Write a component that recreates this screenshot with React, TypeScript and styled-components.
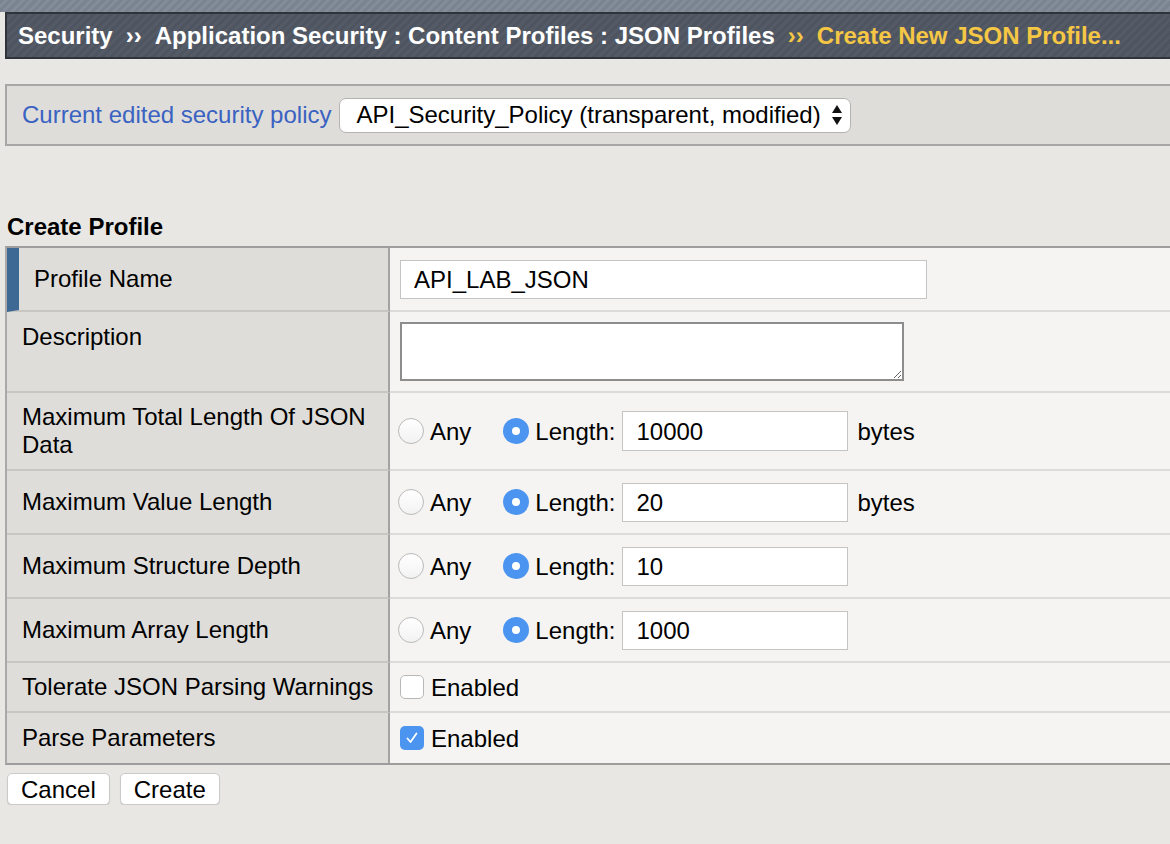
import styled, { createGlobalStyle, css } from 'styled-components'

const GlobalStyle = createGlobalStyle`
    html, body {
        margin: 0;
        padding: 0;
    }
    body {
        background: #e9e7e3;
        font-family: "Liberation Sans", Arial, Helvetica, sans-serif;
        font-size: 24px;
        color: #000;
    }
`

const TopStrip = styled.div`
    height: 12px;
    background: repeating-linear-gradient(135deg, #7a8490 0 3px, #838d99 3px 6px);
`

const Header = styled.div`
    margin-left: 5px;
    height: 43px;
    border: 2px solid #2f333a;
    border-right: none;
    background: repeating-linear-gradient(135deg, #4e5561 0 3px, #545b67 3px 6px);
    display: flex;
    align-items: center;
    padding-left: 11px;
    font-weight: bold;
    color: #fff;
    white-space: nowrap;
`

const Crumb = styled.span<{ $current?: boolean }>`
    color: ${p => p.$current ? '#f6c744' : '#fff'};
`

const Sep = styled.span<{ $current?: boolean }>`
    margin: 0 13px;
    color: ${p => p.$current ? '#f6c744' : '#fff'};
`

const PolicyBar = styled.div`
    margin: 25px 0 0 5px;
    height: 58px;
    border-top: 2px solid #a6a6a6;
    border-bottom: 2px solid #a6a6a6;
    border-left: 2px solid #a6a6a6;
    background: #dfddd9;
    display: flex;
    align-items: center;
    gap: 8px;
    padding-left: 15px;
`

const PolicyLabel = styled.span`
    color: #3a62c2;
`

const PolicySelect = styled.div`
    box-sizing: border-box;
    width: 512px;
    height: 35px;
    border: 1px solid #b3b3b3;
    border-radius: 7px;
    background: #fff;
    display: flex;
    align-items: center;
    gap: 10px;
    padding: 0 0 0 16px;
    white-space: nowrap;
    overflow: hidden;
`

const SectionTitle = styled.div`
    margin: 67px 0 5px;
    padding-left: 7px;
    line-height: 28px;
    font-weight: bold;
`

const FormTable = styled.div`
    margin-left: 5px;
    border-top: 2px solid #9d9d9d;
    border-bottom: 2px solid #9d9d9d;
    border-left: 2px solid #a9a9a9;
`

const Label = styled.div<{ $marker?: boolean; $top?: boolean }>`
    box-sizing: border-box;
    background: #dfddd9;
    border-right: 2px solid #a3a3a3;
    border-bottom: 2px solid #c8c6c2;
    padding-left: 15px;
    padding-right: 6px;
    line-height: 28px;
    display: flex;
    align-items: ${p => p.$top ? 'flex-start' : 'center'};
    padding-top: ${p => p.$top ? '11px' : '0'};
    ${p => p.$marker && css`border-left: 12px solid #3e6994;`}
`

const Value = styled.div<{ $pad?: number; $top?: boolean }>`
    box-sizing: border-box;
    background: #f5f4f2;
    border-bottom: 2px solid #dddbd8;
    padding-left: ${p => p.$pad ?? 10}px;
    display: flex;
    align-items: ${p => p.$top ? 'flex-start' : 'center'};
    padding-top: ${p => p.$top ? '10px' : '0'};
`

const Row = styled.div<{ $h: number }>`
    display: grid;
    grid-template-columns: 383px 1fr;
    height: ${p => p.$h}px;

    &:last-child ${Label}, &:last-child ${Value} {
        border-bottom: none;
    }
`

const TextInput = styled.input<{ $w: number; $h?: number }>`
    box-sizing: border-box;
    width: ${p => p.$w}px;
    height: ${p => p.$h ?? 39}px;
    border: 1px solid #c4c4c4;
    background: #fff;
    padding: 1px 13px 0;
    margin: 0;
    font: inherit;
    color: #000;
    outline: none;
`

const TextArea = styled.textarea`
    box-sizing: border-box;
    width: 504px;
    height: 59px;
    border: 2px solid #8d8d8d;
    background: #fff;
    margin: 0;
    font: inherit;
    resize: both;
    outline: none;
`

const Option = styled.label<{ $gapAfter?: number; $gap?: number }>`
    display: flex;
    align-items: center;
    gap: ${p => p.$gap ?? 6}px;
    margin-right: ${p => p.$gapAfter ?? 0}px;
    padding-top: 2px;
`

const Radio = styled.span<{ $checked?: boolean }>`
    box-sizing: border-box;
    flex: none;
    width: 26px;
    height: 26px;
    margin-top: -2px;
    border-radius: 50%;
    ${p => p.$checked ? css`
        background: #4b94ef;
        display: flex;
        align-items: center;
        justify-content: center;
        &::after {
            content: '';
            width: 8px;
            height: 8px;
            border-radius: 50%;
            background: #fff;
        }
    ` : css`
        background: linear-gradient(#ffffff, #f2f2f2);
        border: 1px solid #bababa;
    `}
`

const Checkbox = styled.span<{ $checked?: boolean }>`
    box-sizing: border-box;
    flex: none;
    width: 24px;
    height: 24px;
    margin-top: -2px;
    border-radius: 5px;
    display: flex;
    align-items: center;
    justify-content: center;
    ${p => p.$checked ? css`
        background: #4b94ef;
    ` : css`
        background: #fff;
        border: 1px solid #b8b8b8;
    `}
`

const Unit = styled.span`
    margin-left: 9px;
    padding-top: 2px;
`

const LengthInput = styled(TextInput)`
    margin-left: 7px;
`

const ButtonRow = styled.div`
    display: flex;
    gap: 10px;
    padding: 8px 0 0 7px;
`

const Button = styled.button`
    height: 32px;
    padding: 2px 13px 0;
    background: #fff;
    border: 1px solid #cacaca;
    border-radius: 5px;
    box-shadow: 0 1px 1px rgba(0, 0, 0, 0.12);
    font: inherit;
    color: #000;
    line-height: 28px;
`

function SelectArrows() {
    return (
        <svg width="12" height="24" viewBox="0 0 12 24">
            <polygon points="6,2 11,10 1,10" fill="#111" />
            <polygon points="1,14 11,14 6,22" fill="#111" />
        </svg>
    )
}

function LengthRow({ label, value, unit, h, twoLine }: { label: string; value: string; unit?: string; h: number; twoLine?: boolean }) {
    return (
        <Row $h={h}>
            <Label>{label}</Label>
            <Value $pad={8}>
                <Option $gapAfter={32}>
                    <Radio />
                    Any
                </Option>
                <Option>
                    <Radio $checked />
                    Length:
                </Option>
                <LengthInput $w={226} $h={twoLine ? 40 : 39} defaultValue={value} />
                {unit && <Unit>{unit}</Unit>}
            </Value>
        </Row>
    )
}

function CheckRow({ label, checked }: { label: string; checked?: boolean }) {
    return (
        <Row $h={50}>
            <Label>{label}</Label>
            <Value>
                <Option $gap={7}>
                    <Checkbox $checked={checked}>
                        {checked && (
                            <svg width="14" height="14" viewBox="0 0 14 14">
                                <path d="M2.5 7.5 L5.5 11 L11.5 2.5" fill="none" stroke="#fff" strokeWidth="1.8" strokeLinecap="round" strokeLinejoin="round" />
                            </svg>
                        )}
                    </Checkbox>
                    Enabled
                </Option>
            </Value>
        </Row>
    )
}

export default function App() {
    return (
        <>
            <GlobalStyle />
            <TopStrip />
            <Header>
                <Crumb>Security</Crumb>
                <Sep>››</Sep>
                <Crumb>Application Security : Content Profiles : JSON Profiles</Crumb>
                <Sep $current>››</Sep>
                <Crumb $current>Create New JSON Profile...</Crumb>
            </Header>

            <PolicyBar>
                <PolicyLabel>Current edited security policy</PolicyLabel>
                <PolicySelect>
                    <span>API_Security_Policy (transparent, modified)</span>
                    <SelectArrows />
                </PolicySelect>
            </PolicyBar>

            <SectionTitle>Create Profile</SectionTitle>

            <FormTable>
                <Row $h={64}>
                    <Label $marker>Profile Name</Label>
                    <Value>
                        <TextInput $w={527} defaultValue="API_LAB_JSON" />
                    </Value>
                </Row>
                <Row $h={81}>
                    <Label $top>Description</Label>
                    <Value $top>
                        <TextArea />
                    </Value>
                </Row>
                <LengthRow label="Maximum Total Length Of JSON Data" value="10000" unit="bytes" h={78} twoLine />
                <LengthRow label="Maximum Value Length" value="20" unit="bytes" h={64} />
                <LengthRow label="Maximum Structure Depth" value="10" h={64} />
                <LengthRow label="Maximum Array Length" value="1000" h={64} />
                <CheckRow label="Tolerate JSON Parsing Warnings" />
                <CheckRow label="Parse Parameters" checked />
            </FormTable>

            <ButtonRow>
                <Button>Cancel</Button>
                <Button>Create</Button>
            </ButtonRow>
        </>
    )
}
